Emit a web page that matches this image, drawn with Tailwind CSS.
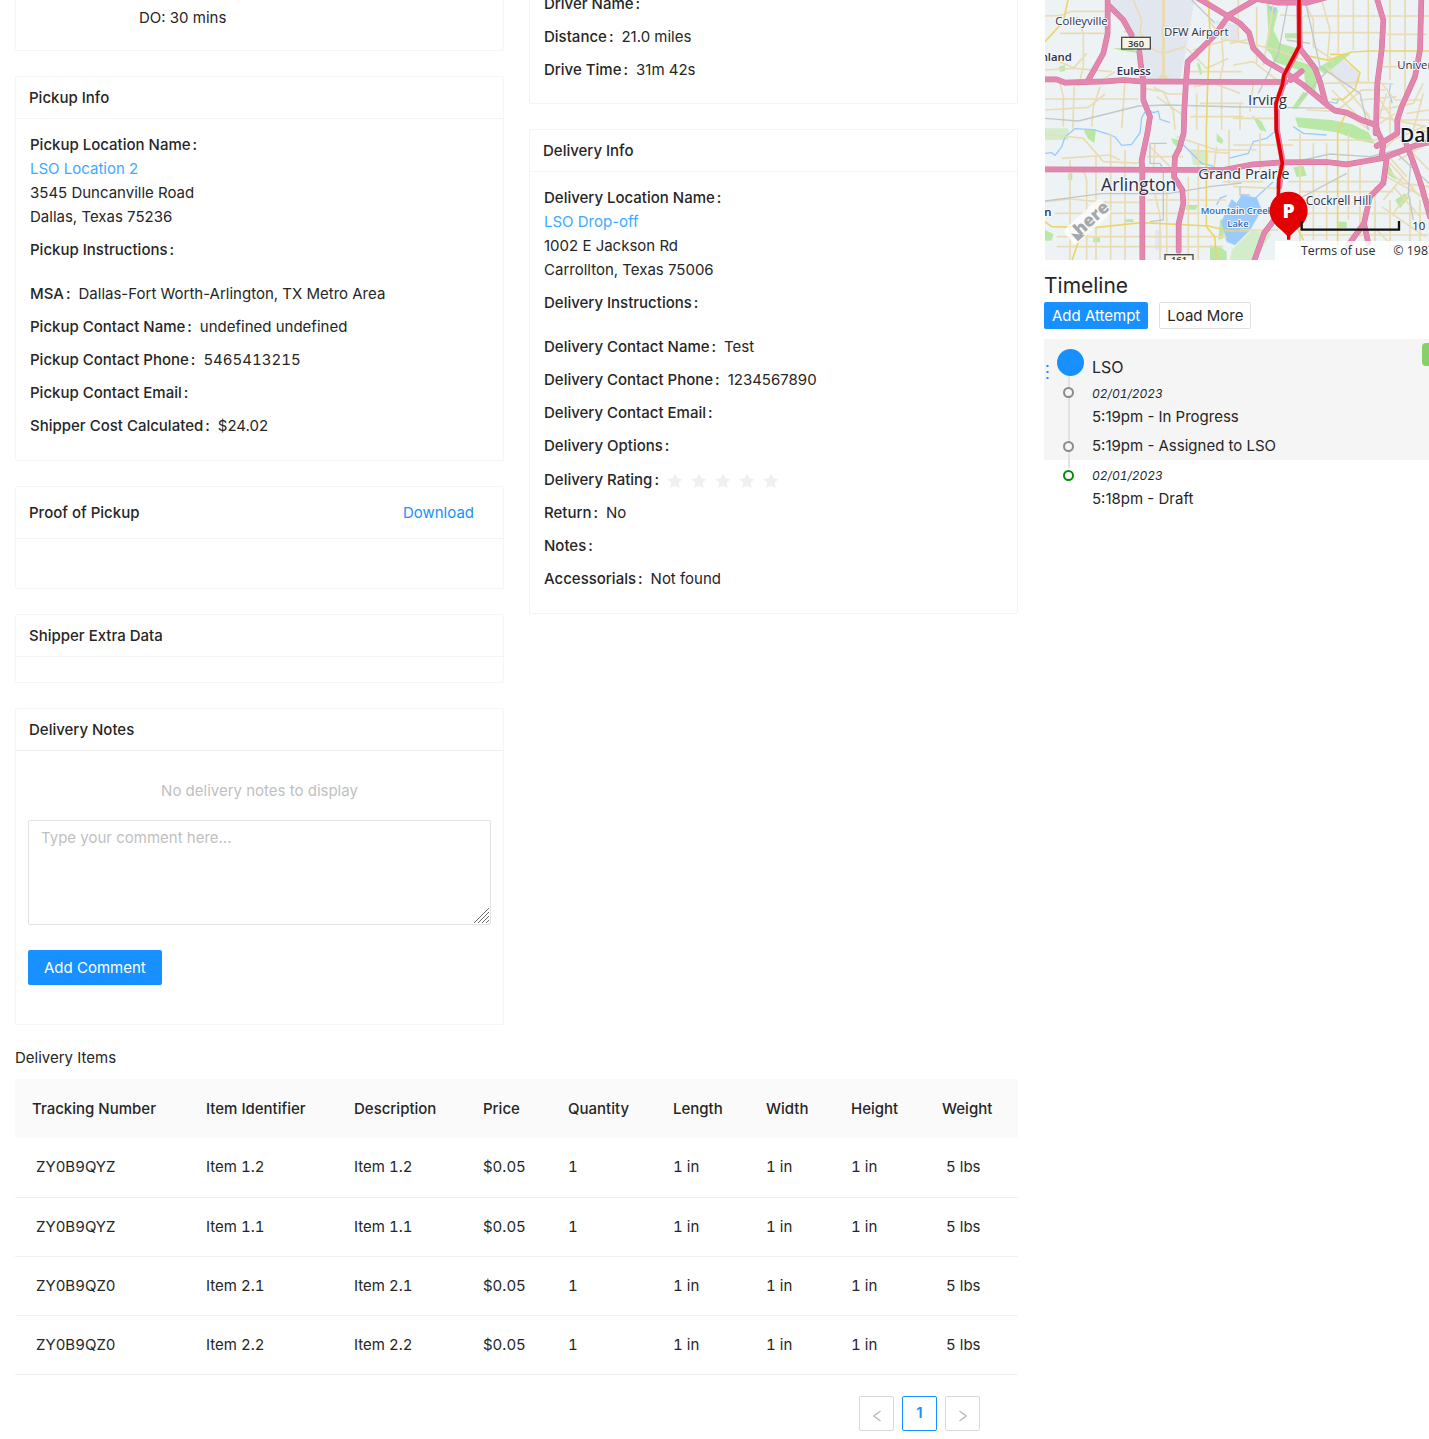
<!DOCTYPE html>
<html lang="en">
<head>
  <meta charset="UTF-8">
  <title>Delivery Details</title>
  <meta name="viewport" content="width=device-width, initial-scale=1.0">
  <script src="https://cdn.jsdelivr.net/npm/@tailwindcss/browser@4"></script>
</head>
<body class="bg-white font-['Inter',sans-serif] text-[15px] leading-6 text-[#262626] overflow-x-hidden">

  <main class="-mt-[9px] pl-[15px] grid grid-cols-[minmax(0,1003fr)_minmax(0,385fr)] gap-[26px]">

    <div>
      <div class="grid grid-cols-2 gap-[25px] items-start">

        <!-- Left column -->
        <div class="flex flex-col gap-[25px]">
          <section class="border border-[#f5f5f5] rounded-xs pt-[14px] pb-[20px] pl-[123px]">
            <p>DO: 30 mins</p>
          </section>

          <section class="border border-[#f5f5f5] rounded-xs">
            <h2 class="h-[42px] flex items-center px-[13px] border-b border-[#f3f3f3] font-medium">Pickup Info</h2>
            <dl class="px-[14px] pt-[14px] pb-[22px] flex flex-col gap-[9px] [&_dt]:font-medium [&_dt]:after:content-[':'] [&_dt]:after:ml-0.5 [&_dt]:after:mr-2 [&>div]:flex">
              <div class="flex-wrap">
                <dt class="w-full">Pickup Location Name</dt>
                <dd><a href="#" class="text-[#40a9ff]">LSO Location 2</a><br>3545 Duncanville Road<br>Dallas, Texas 75236</dd>
              </div>
              <div class="mb-[11px]"><dt>Pickup Instructions</dt><dd></dd></div>
              <div><dt>MSA</dt><dd>Dallas-Fort Worth-Arlington, TX Metro Area</dd></div>
              <div><dt>Pickup Contact Name</dt><dd>undefined undefined</dd></div>
              <div><dt>Pickup Contact Phone</dt><dd class="tabular-nums">5465413215</dd></div>
              <div><dt>Pickup Contact Email</dt><dd></dd></div>
              <div><dt>Shipper Cost Calculated</dt><dd>$24.02</dd></div>
            </dl>
          </section>

          <section class="border border-[#f5f5f5] rounded-xs">
            <div class="h-[52px] flex items-center justify-between pl-[13px] pr-[29px] border-b border-[#f3f3f3]">
              <h2 class="font-medium">Proof of Pickup</h2>
              <a href="#" class="text-[#1890ff]">Download</a>
            </div>
            <div class="h-[49px]"></div>
          </section>

          <section class="border border-[#f5f5f5] rounded-xs">
            <h2 class="h-[42px] flex items-center px-[13px] border-b border-[#f3f3f3] font-medium">Shipper Extra Data</h2>
            <div class="h-[25px]"></div>
          </section>

          <section class="border border-[#f5f5f5] rounded-xs">
            <h2 class="h-[42px] flex items-center px-[13px] border-b border-[#f0f0f0] font-medium">Delivery Notes</h2>
            <form class="px-[12px] pt-[28px] pb-[39px]">
              <p class="text-center text-[#bfbfbf]">No delivery notes to display</p>
              <div class="relative mt-[17px]">
                <textarea aria-label="Comment" placeholder="Type your comment here..." class="block w-full h-[105px] px-3 py-[5px] border border-[#e2e2e2] rounded-xs resize-none placeholder:text-[#bfbfbf]"></textarea>
                <svg class="absolute right-[2px] bottom-[2px] size-[15px]" viewBox="0 0 15 15" fill="none" stroke="#6b6b6b" aria-hidden="true"><path d="M0 15L15 0M4 15L15 4M8 15l7-7M12 15l3-3"/></svg>
              </div>
              <button type="button" class="mt-[25px] h-[35px] px-4 bg-[#1890ff] text-white rounded-xs shadow-xs">Add Comment</button>
            </form>
          </section>
        </div>

        <!-- Middle column -->
        <div class="flex flex-col gap-[25px]">
          <section class="border border-t-0 border-[#f3f3f3] rounded-xs">
            <dl class="px-[14px] pt-px pb-[21px] flex flex-col gap-[9px] [&_dt]:font-medium [&_dt]:after:content-[':'] [&_dt]:after:ml-0.5 [&_dt]:after:mr-2 [&>div]:flex">
              <div><dt>Driver Name</dt><dd></dd></div>
              <div><dt>Distance</dt><dd>21.0 miles</dd></div>
              <div><dt>Drive Time</dt><dd>31m 42s</dd></div>
            </dl>
          </section>

          <section class="border border-[#f3f3f3] rounded-xs">
            <h2 class="h-[42px] flex items-center px-[13px] border-b border-[#f5f5f5] font-medium">Delivery Info</h2>
            <dl class="px-[14px] pt-[14px] pb-[22px] flex flex-col gap-[9px] [&_dt]:font-medium [&_dt]:after:content-[':'] [&_dt]:after:ml-0.5 [&_dt]:after:mr-2 [&>div]:flex">
              <div class="flex-wrap">
                <dt class="w-full">Delivery Location Name</dt>
                <dd><a href="#" class="text-[#40a9ff]">LSO Drop-off</a><br>1002 E Jackson Rd<br>Carrollton, Texas 75006</dd>
              </div>
              <div class="mb-[11px]"><dt>Delivery Instructions</dt><dd></dd></div>
              <div><dt>Delivery Contact Name</dt><dd>Test</dd></div>
              <div><dt>Delivery Contact Phone</dt><dd>1234567890</dd></div>
              <div><dt>Delivery Contact Email</dt><dd></dd></div>
              <div><dt>Delivery Options</dt><dd></dd></div>
              <div class="h-[25px] items-center">
                <dt>Delivery Rating</dt>
                <dd class="flex items-center gap-2 pt-0.5 text-[#f0f0f0]" role="img" aria-label="0 of 5 stars">
                  <svg class="size-4" viewBox="0 0 16 16" fill="currentColor"><path d="M8 .5l2.3 4.8 5.3.7-3.9 3.7 1 5.3L8 12.5 3.3 15l1-5.3L.4 6l5.3-.7z"/></svg>
                  <svg class="size-4" viewBox="0 0 16 16" fill="currentColor"><path d="M8 .5l2.3 4.8 5.3.7-3.9 3.7 1 5.3L8 12.5 3.3 15l1-5.3L.4 6l5.3-.7z"/></svg>
                  <svg class="size-4" viewBox="0 0 16 16" fill="currentColor"><path d="M8 .5l2.3 4.8 5.3.7-3.9 3.7 1 5.3L8 12.5 3.3 15l1-5.3L.4 6l5.3-.7z"/></svg>
                  <svg class="size-4" viewBox="0 0 16 16" fill="currentColor"><path d="M8 .5l2.3 4.8 5.3.7-3.9 3.7 1 5.3L8 12.5 3.3 15l1-5.3L.4 6l5.3-.7z"/></svg>
                  <svg class="size-4" viewBox="0 0 16 16" fill="currentColor"><path d="M8 .5l2.3 4.8 5.3.7-3.9 3.7 1 5.3L8 12.5 3.3 15l1-5.3L.4 6l5.3-.7z"/></svg>
                </dd>
              </div>
              <div><dt>Return</dt><dd>No</dd></div>
              <div><dt>Notes</dt><dd></dd></div>
              <div><dt>Accessorials</dt><dd>Not found</dd></div>
            </dl>
          </section>
        </div>
      </div>

      <!-- Items table -->
      <h2 class="mt-[21px]">Delivery Items</h2>
      <table class="mt-[9px] w-full table-fixed text-left tabular-nums [&_th]:h-[59px] [&_th]:font-medium [&_th]:pl-[17px] [&_td]:h-[59px] [&_td]:pl-[17px] [&_td]:border-b [&_td]:border-[#f0f0f0]">
        <colgroup>
          <col class="w-[174px]"><col class="w-[148px]"><col class="w-[129px]"><col class="w-[85px]"><col class="w-[105px]"><col class="w-[93px]"><col class="w-[85px]"><col class="w-[91px]"><col class="w-[93px]">
        </colgroup>
        <thead class="bg-[#fafafa]">
          <tr><th>Tracking Number</th><th>Item Identifier</th><th>Description</th><th>Price</th><th>Quantity</th><th>Length</th><th>Width</th><th>Height</th><th>Weight</th></tr>
        </thead>
        <tbody>
          <tr><td>&nbsp;ZY0B9QYZ</td><td>Item 1.2</td><td>Item 1.2</td><td>$0.05</td><td>1</td><td>1 in</td><td>1 in</td><td>1 in</td><td>&nbsp;5 lbs</td></tr>
          <tr><td>&nbsp;ZY0B9QYZ</td><td>Item 1.1</td><td>Item 1.1</td><td>$0.05</td><td>1</td><td>1 in</td><td>1 in</td><td>1 in</td><td>&nbsp;5 lbs</td></tr>
          <tr><td>&nbsp;ZY0B9QZ0</td><td>Item 2.1</td><td>Item 2.1</td><td>$0.05</td><td>1</td><td>1 in</td><td>1 in</td><td>1 in</td><td>&nbsp;5 lbs</td></tr>
          <tr><td>&nbsp;ZY0B9QZ0</td><td>Item 2.2</td><td>Item 2.2</td><td>$0.05</td><td>1</td><td>1 in</td><td>1 in</td><td>1 in</td><td>&nbsp;5 lbs</td></tr>
        </tbody>
      </table>
      <nav aria-label="Pagination" class="mt-[21px] mb-2 pr-[38px] flex justify-end gap-2">
        <button type="button" disabled aria-label="Previous page" class="size-[35px] flex items-center justify-center pt-1.5 border border-[#d9d9d9] rounded-xs text-[#b5b5b5]">
          <svg class="w-2 h-3" viewBox="0 0 8 12" fill="none" stroke="currentColor" stroke-width="1.2"><path d="M7.5 1L.8 6l6.700 5"/></svg>
        </button>
        <button type="button" aria-current="page" class="size-[35px] flex items-center justify-center border border-[#1890ff] rounded-xs text-[#1890ff] font-semibold">1</button>
        <button type="button" disabled aria-label="Next page" class="size-[35px] flex items-center justify-center pt-1.5 border border-[#d9d9d9] rounded-xs text-[#b5b5b5]">
          <svg class="w-2 h-3" viewBox="0 0 8 12" fill="none" stroke="currentColor" stroke-width="1.2"><path d="M.5 1l6.700 5-6.700 5"/></svg>
        </button>
      </nav>
    </div>

    <!-- Map and timeline -->
    <aside>
      <svg class="block w-full h-[269px] pl-px font-['Open_Sans',sans-serif]" viewBox="15 -27 1152 807" preserveAspectRatio="xMinYMin slice" role="img" aria-label="Route map">
        <rect x="15" y="-27" width="1152" height="807" fill="#edf3f5"/>
        <!-- airport and districts -->
        <path d="M215-27H468L440 140 420 240H318L300 150 275 85 215 30zM890 165L955 215 960 245 930 265 850 210zM525 60L600 75 590 120 550 125zM345 690h20v60h-20z" fill="#e2e7ef"/>
        <!-- parks -->
        <g fill="#b9e8a5">
          <path d="M680 10l35 20-15 60 20 40 50 15-10 45-60-20-25-25 10-50zM735 100h40v15h-40zM690 155l90 30 60 20-15 70-28-10-5-50-90-30z"/>
          <path d="M755 325l35-50 15 8-35 45zM765 352l110 8 60 12 50 25 20 35-45-10-70-25-115-15zM1030 480l20 20 20 40-25-15z"/>
          <path d="M830 205l80-45 20 3-75 60zM470 190l10 35 8-5-10-30zM57 200l18-5v18l-15 2zM217 145l55-3 25 18-50-8z"/>
          <path d="M130 388h38l-5 42-20-15zM85 520h12v20H85zM394 415l25 5-8 20-12-10zM530 400l20 20-3 12-17-8zM15 690l25 12-5 20H15zM440 615h35l-8 14h-30zM510 735l30 5 20 15v25h-50zM255 658h25v8h-25zM160 712h20v15h-20zM635 345l30 20 15 30-20-5z"/>
          <path d="M760 502l30-5 10 30-30 5zM895 665h25v20h-25zM1065 600l30-20 10 15-25 30zM540 660l15-5-5 60-15 5z"/>
          <path fill="#d3edca" d="M575 750l60-60 60 10-50 80h-75zM15 385h70v35H15zM450 450h55v45h-45z"/>
        </g>
        <!-- water -->
        <g fill="#9bcbfc" stroke="#9bcbfc">
          <path d="M575 598l15 12 15-25 45 8 15 37-35 60-45 45-25-10-15-60 10-25zM685 20l25 3-8 20z"/>
          <path fill="none" stroke-width="4" d="M530 615l10-20 20-8M15 460l20-2 10 8 20-25 10-30 30-25 55 3 40 12 25 10 20 25 30-3 25-35 5-45 15-25 20 10 15-5 5 25 30 10M425 430l60 60 40 10M565 475l60-15 15-35 40-10 30-25M640 600l60-55M760 380l30 20 70 5M1052 250l-5 30 10 30M865 305l25 5 5-10"/>
        </g>
        <!-- local roads -->
        <g fill="none" stroke="#e9dcb5" stroke-width="5" stroke-linejoin="round">
          <path d="M15 48l50-2 30-12h105M60 100h140M110 50l20 50v100l-15 60M45 180l60 25 110 10M15 210l85-5 40-45M15 297h280M60 250l10 40v90M103 260l-5 130M15 330l130-8 50-40M180 260l-20 60-5 60M225 215l-45 30M255 245l-10 140M310 265l60 10 30 60 5 55M340 262l45 20 55 0M350 290l85 60"/>
          <path d="M280 0l25 60-5 40 40 50 30 10 65-20M250 95h30M440 145l60 60 65-30M445 215h160M460 260l60-10 80 30M470 280v110M480 310h130M450 350h160M545 250v140M505 60l40 50 5 80-10 50M570 130l70-15M460 150l100-30 60 10"/>
          <path stroke-width="10" d="M370-27V225l-15 15M370 225l15 15"/>
          <path d="M15 405h30l85 10 60 70 120 5M65 475l145-10 30 15M90 480v300M130 510l10 30v240M168 470v310M212 400v380M255 450v330M15 605l75-8 110 10 100 0M45 640h490M50 710h510M50 740h500M345 430l-5 80M330 440l60 60M345 580l15 70v130M380 570v210M320 600h240M445 530v250M475 430v350M530 440l-10 80M550 545h120M567 390v160M410 410l120 40h120M450 450l120 10M320 470h110"/>
          <path d="M595 0v120M650 20v170M700 15l-30 180M720 45l60 3M790 48h377M780 98h260M1040 103h120M845 0l25 90-8 90M895 0v160M940 0v150M985 0v250M1050 0v240M1095 0v300M790 0l30 60 0 80 60 40M1025 200h115M580 120l130 30 80 30M580 195l60-10 90 70M600 310v80M580 355h130M640 245l-10 90"/>
          <path d="M860 200l130 150M875 270l90 90M840 250l130-3 90 5M895 330l70-60 70 0M960 300l110-10M965 320l40 60 60-40M1025 250l40 50 80 0M1020 330l100-20 30-60M1010 350l150 30M1050 300v110M1020 300l60 90M1040 280l-25 80M1100 340l67-10M1080 360h87M1120 390l30-110M800 330l110 5 80 55"/>
          <path d="M580 435h180M660 400v120M745 420h270M745 545h280M780 400v380M820 430v290M860 430v290M925 400v260M960 500v210M1005 560v200M780 575h280M790 640h380M785 705h380M580 560l130 5M600 690h115M1030 500l60 50 77 10M1040 530l127 70M1050 490l90 100M1020 440l80 90M1075 480l70-40M1090 530l-60 70M1060 560l80 90M1060 640l60-80M1025 620l130 90M1050 600v160M1110 590v160M1140 600v140M1010 690l80 80M1000 480l60-60 90-40M1080 420l87 90"/>
        </g>
        <g fill="none" stroke="#c3c6ca" stroke-width="4">
          <path d="M15 355l100 8 180-45 90-3 215 6 300 4M15 603l170-22 200 0 130-22 90-10M455 0l70 70M745 0l-30 160-60 120M795 0l45 200 120 80 25 110M330 430h50M330 430v60l30 0 10 20v150l-40 5M770 600l150-80M860 215l-85 90M600 560v25l30 0M790 480l80-18 120 8 100-25M1115 450l-10 130 15 80M1060 450l107 100M740 120l70 10"/>
        </g>
        <g fill="none" stroke="#ead56d" stroke-width="5">
          <path d="M15 125l55-60 15-70M15 665l20 15 130 3 140-15 200 10 62 15h60M155 665l-40 60-20 60M505 0l5 100-8 180-3 110v290l25 30 5 70M799 166l65 15 70-25 60-3h173M870 163h30l60 55-15 50-35 30-35 0M893 390V780M1145 390l22 10M915 345l-20 45M760 660l30 60"/>
        </g>
        <!-- highways: dark casing, then the pink road -->
        <g fill="none" stroke-linejoin="round" stroke-linecap="round">
          <g stroke="#d2739d" stroke-width="17">
            <path d="M10 238H50L75 248 200 244 250 240 300 244 600 246H737M203-30V100L190 160 145 240M205 15L250 60 275 105M298 155L302 190 310 245V300L330 350 322 400 305 480 307 510V790M470-8L560 46 600 70 627 98 640 145 680 185 732 215 790 255 862 315 885 332 920 338 965 360 1007 375V400"/>
            <path d="M655-6L567 45 525 105 470 160 443 185 438 245 433 330 431 400 418 445 405 470 402 530 427 570 430 610 416 670V752M640-5L715 8H800L860-8M777-30L779 145 825 205 840 245 857 310M1005-30L1012 0 1030 60 1025 150 1012 250 1008 375 1013 395 1030 430 1025 470M1144-30V0L1140 150 1125 230 1085 320 1072 360V400L1010 438M752 240L785 214"/>
            <path d="M10 508L550 510 640 493 727 487 860 486 920 493 1030 474 1130 435 1175 425M1100 435L1125 500 1145 560 1170 650M1040 475L1030 550 990 590 972 670 925 735M972 670L985 730M710 650L672 700 640 790M779 140L734 225 729 255 710 310 711 390 727 480 718 560"/>
          </g>
          <g stroke="#e487ae" stroke-width="14">
            <path d="M10 238H50L75 248 200 244 250 240 300 244 600 246H737M203-30V100L190 160 145 240M205 15L250 60 275 105M298 155L302 190 310 245V300L330 350 322 400 305 480 307 510V790M470-8L560 46 600 70 627 98 640 145 680 185 732 215 790 255 862 315 885 332 920 338 965 360 1007 375V400"/>
            <path d="M655-6L567 45 525 105 470 160 443 185 438 245 433 330 431 400 418 445 405 470 402 530 427 570 430 610 416 670V752M640-5L715 8H800L860-8M777-30L779 145 825 205 840 245 857 310M1005-30L1012 0 1030 60 1025 150 1012 250 1008 375 1013 395 1030 430 1025 470M1144-30V0L1140 150 1125 230 1085 320 1072 360V400L1010 438M752 240L785 214"/>
            <path d="M10 508L550 510 640 493 727 487 860 486 920 493 1030 474 1130 435 1175 425M1100 435L1125 500 1145 560 1170 650M1040 475L1030 550 990 590 972 670 925 735M972 670L985 730M710 650L672 700 640 790M779 140L734 225 729 255 710 310 711 390 727 480 718 560"/>
          </g>
        </g>
        <!-- place names -->
        <g fill="#2d2f45" stroke="#f6f8fa" stroke-width="6" stroke-linejoin="round" paint-order="stroke" font-size="34" font-weight="500">
          <text x="46" y="75">Colleyville</text>
          <text x="372" y="108">DFW Airport</text>
          <text x="2" y="182" font-weight="600">nland</text>
          <text x="230" y="225" font-weight="600">Euless</text>
          <text x="624" y="315" font-size="45">Irving</text>
          <text x="1072" y="208">University</text>
          <text x="183" y="574" font-size="53">Arlington</text>
          <text x="475" y="538" font-size="44">Grand Prairie</text>
          <text x="797" y="615" font-size="36">Cockrell Hill</text>
          <text x="13" y="647" font-weight="600">n</text>
          <text x="1080" y="426" font-size="58" font-weight="600" fill="#15151f">Dallas</text>
          <g fill="#2a6cbd" font-size="28" font-weight="600">
            <text x="482" y="642">Mountain Creek</text>
            <text x="562" y="680">Lake</text>
          </g>
        </g>
        <!-- road shields -->
        <g fill="#f8f4e6" stroke="#4c4c4c" stroke-width="4">
          <rect x="245" y="112" width="86" height="35"/>
          <rect x="375" y="764" width="84" height="35"/>
        </g>
        <g fill="#333" font-size="28" font-weight="600" text-anchor="middle">
          <text x="288" y="140">360</text>
          <text x="417" y="790">161</text>
        </g>
        <!-- provider mark -->
        <g transform="translate(147 662) rotate(-42)">
          <rect x="-80" y="-30" width="150" height="58" rx="14" fill="#fff" fill-opacity=".75"/>
          <path d="M-66-8v32h28z" fill="#a3a8ac"/>
          <text x="-52" y="17" font-size="52" font-weight="800" fill="#a3a8ac">here</text>
        </g>
        <!-- route and pickup pin -->
        <path d="M777-30V140L732 225 727 255 708 310 709 390 727 490 716 540 715 600" fill="none" stroke="#e20000" stroke-width="11" stroke-linejoin="round"/>
        <path d="M746 575a57 57 0 0 1 57 57c0 28-18 45-37 60l-15 15v12h-10v-12l-15-15c-19-15-37-32-37-60a57 57 0 0 1 57-57z" fill="#e20000"/>
        <text x="746" y="655" font-size="58" font-weight="800" text-anchor="middle" fill="#fff">P</text>
        <!-- scale and copyright -->
        <path d="M785 663v26h292v-26" fill="none" stroke="#111" stroke-width="7"/>
        <path d="M705 723h462v57H705z" fill="#fff" fill-opacity=".85"/>
        <g fill="#2b2b33" font-size="37">
          <text x="1117" y="690" font-size="34">10 km</text>
          <text x="783" y="764">Terms of use</text>
          <text x="1060" y="764">© 1987</text>
        </g>
      </svg>

      <h2 class="mt-[10px] text-[21px] leading-8">Timeline</h2>
      <div class="flex gap-[11px]">
        <button type="button" class="h-[27px] px-2 pt-px bg-[#1890ff] text-white rounded-xs shadow-xs">Add Attempt</button>
        <button type="button" class="h-[27px] px-[7px] pt-px border border-[#e0e0e0] rounded-xs">Load More</button>
      </div>

      <div class="relative mt-[10px]">
        <div class="bg-[#f5f5f5] h-[121px] pt-[10px]">
          <div class="flex h-[33px] -mr-10">
            <button type="button" aria-label="More actions" class="w-[13px] pl-[2px] pt-[12px] text-[#1890ff]">
              <svg class="w-[3px] h-[14px]" viewBox="0 0 3 14" fill="currentColor"><path d="M.5 0h2v2h-2zM.5 6h2v2h-2zM.5 12h2v2h-2z"/></svg>
            </button>
            <span class="relative z-10 size-[27px] rounded-full bg-[#1890ff]"></span>
            <span class="ml-2 mt-[6px] text-base">LSO</span>
          </div>
          <ol>
            <li class="flex items-start h-[56px]">
              <span class="relative z-10 size-[11px] ml-[19px] mt-[5px] rounded-full border-2 border-[#8c8c8c] bg-[#f5f5f5]"></span>
              <div class="ml-[18px]">
                <time class="block text-xs leading-[23px] italic tabular-nums">02/01/2023</time>
                <p>5:19pm - In Progress</p>
              </div>
            </li>
            <li class="flex items-center h-[16px]">
              <span class="relative z-10 size-[11px] ml-[19px] rounded-full border-2 border-[#8c8c8c] bg-[#f5f5f5]"></span>
              <p class="ml-[18px]">5:19pm - Assigned to LSO</p>
            </li>
          </ol>
        </div>
        <div class="flex items-start pt-[4px]">
          <span class="relative z-10 size-[11px] ml-[19px] mt-[6px] rounded-full border-2 border-[#0a8a0a] bg-white"></span>
          <div class="ml-[18px]">
            <time class="block text-xs leading-[23px] italic tabular-nums">02/01/2023</time>
            <p>5:18pm - Draft</p>
          </div>
        </div>
        <!-- connector behind the dots, status tag at the edge -->
        <span class="absolute left-[24px] top-[37px] w-[2px] h-[92px] bg-[#dfe3e5]"></span>
        <span class="absolute right-0 top-[4px] w-[7px] h-[23px] rounded-l-[4px] bg-[#87d068]"></span>
      </div>
    </aside>
  </main>

</body>
</html>
